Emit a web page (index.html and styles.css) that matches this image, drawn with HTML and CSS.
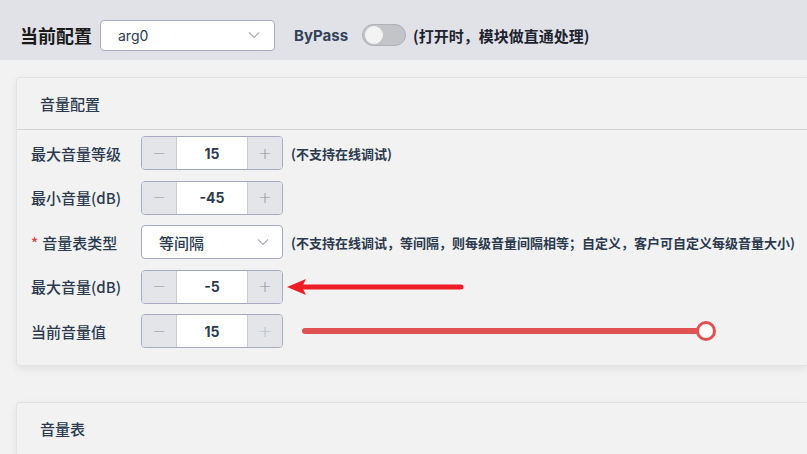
FILE: index.html
```html
<!DOCTYPE html>
<html lang="zh">
<head>
<meta charset="utf-8">
<link rel="stylesheet" href="styles.css">
</head>
<body>
<div class="topbar">
  <span class="title">当前配置</span>
  <div class="select top-select">
    <span class="select-value">arg0</span>
    <svg class="chev" width="12" height="8" viewBox="0 0 12 8"><path d="M1 1.5 L6 6.5 L11 1.5" fill="none" stroke="#a9acb8" stroke-width="1.2"/></svg>
  </div>
  <span class="bypass">ByPass</span>
  <span class="toggle"><span class="knob"></span></span>
  <span class="note-top">(打开时，模块做直通处理)</span>
</div>

<main class="content">
  <section class="card">
    <div class="card-header">音量配置</div>
    <div class="card-body">
      <div class="row">
        <label class="label">最大音量等级</label>
        <div class="num">
          <span class="btn">−</span><span class="val">15</span><span class="btn">+</span>
        </div>
        <span class="hint">(不支持在线调试)</span>
      </div>
      <div class="row">
        <label class="label">最小音量(dB)</label>
        <div class="num">
          <span class="btn">−</span><span class="val">-45</span><span class="btn">+</span>
        </div>
      </div>
      <div class="row">
        <label class="label"><span class="req">*</span>音量表类型</label>
        <div class="select row-select">
          <span class="select-value">等间隔</span>
          <svg class="chev" width="12" height="8" viewBox="0 0 12 8"><path d="M1 1.5 L6 6.5 L11 1.5" fill="none" stroke="#a9acb8" stroke-width="1.2"/></svg>
        </div>
        <span class="hint">(不支持在线调试，等间隔，则每级音量间隔相等；自定义，客户可自定义每级音量大小)</span>
      </div>
      <div class="row arrow-row">
        <label class="label">最大音量(dB)</label>
        <div class="num">
          <span class="btn">−</span><span class="val">-5</span><span class="btn">+</span>
        </div>
        <svg class="arrow" width="180" height="20" viewBox="0 0 180 20">
          <line x1="14" y1="10" x2="174" y2="10" stroke="#ee1c24" stroke-width="5" stroke-linecap="round"/>
          <polygon points="0,10 19,2 15,10 19,18" fill="#ee1c24"/>
        </svg>
      </div>
      <div class="row">
        <label class="label">当前音量值</label>
        <div class="num">
          <span class="btn">−</span><span class="val">15</span><span class="btn disabled">+</span>
        </div>
        <div class="slider">
          <span class="track"></span>
          <span class="thumb"></span>
        </div>
      </div>
    </div>
  </section>

  <section class="card card2">
    <div class="card-header">音量表</div>
  </section>
</main>
</body>
</html>
```

FILE: styles.css
```css
* { box-sizing: border-box; }
html, body { margin: 0; padding: 0; }
body {
  background: #f2f2f2;
  font-family: "Inter", "Noto Sans CJK SC", sans-serif;
  color: #2c3a4f;
  width: 807px;
  height: 454px;
  overflow: hidden;
}
.topbar {
  height: 60px;
  background: #e1e2e7;
  display: flex;
  align-items: center;
  padding: 10px 0 0 20px;
}
.title {
  font-family: "Noto Sans CJK SC", sans-serif;
  font-size: 18px;
  font-weight: 700;
  color: #1a1a1a;
  margin-right: 8px;
}
.select {
  display: flex;
  align-items: center;
  justify-content: space-between;
  background: #fff;
  border: 1px solid #a5aac0;
  border-radius: 4px;
  flex-shrink: 0;
}
.top-select {
  width: 175px;
  height: 31px;
  padding: 0 14px 0 17px;
}
.select-value {
  font-size: 14px;
  color: #2c3a4f;
}
.top-select .select-value { font-family: "Inter", sans-serif; font-size: 14px; }
.bypass {
  margin-left: 19px;
  font-size: 15px;
  font-weight: 700;
  color: #33415a;
}
.toggle {
  margin-left: 14px;
  width: 44px;
  height: 22px;
  border-radius: 11px;
  background: #c3c4c8;
  border: 1px solid #b0b1b6;
  display: flex;
  align-items: center;
  padding-left: 2px;
  flex-shrink: 0;
}
.knob {
  width: 18px;
  height: 18px;
  border-radius: 50%;
  background: #f3f3f3;
}
.note-top {
  margin-left: 7px;
  font-family: "Noto Sans CJK SC", sans-serif;
  font-size: 15px;
  font-weight: 700;
  color: #1e2330;
}

.content {
  padding: 17px 0 0 16px;
}
.card {
  background: #f2f2f2;
  border: 1px solid #e3e3e3;
  border-right: none;
  border-radius: 4px 0 0 4px;
  box-shadow: 0 3px 8px rgba(0, 0, 0, 0.07);
}
.card-header {
  height: 52px;
  line-height: 51px;
  padding-left: 23px;
  border-bottom: 1px solid #d6d6d6;
  font-family: "Noto Sans CJK SC", sans-serif;
  font-size: 15px;
  font-weight: 500;
  color: #2c3a4f;
}
.card-body {
  padding: 6px 0 17px 14px;
  display: flex;
  flex-direction: column;
  gap: 10.5px;
}
.row {
  display: flex;
  align-items: center;
  height: 34px;
  position: relative;
}
.label {
  width: 110px;
  flex-shrink: 0;
  font-family: "Noto Sans CJK SC", sans-serif;
  font-size: 15px;
  font-weight: 500;
  color: #2c3a4f;
}
.req {
  color: #e0403a;
  margin-right: 4px;
}
.num {
  display: flex;
  width: 142px;
  height: 34px;
  flex-shrink: 0;
  border: 1px solid #a5aac0;
  border-radius: 4px;
  overflow: hidden;
  background: #fff;
}
.btn {
  width: 35px;
  background: #e4e5e8;
  color: #8b8f99;
  display: flex;
  align-items: center;
  justify-content: center;
  font-family: "DejaVu Sans", sans-serif;
  font-size: 16px;
  font-weight: 300;
}
.btn:first-child { border-right: 1px solid #c9ccd6; }
.btn:last-child { border-left: 1px solid #c9ccd6; }
.btn.disabled { color: #b8bbc4; }
.val {
  flex: 1;
  display: flex;
  align-items: center;
  justify-content: center;
  font-family: "Inter", sans-serif;
  font-size: 14px;
  font-weight: 700;
  color: #2c3a4f;
}
.row-select {
  width: 142px;
  height: 34px;
  padding: 0 13px 0 17px;
}
.row-select .select-value {
  font-family: "Noto Sans CJK SC", sans-serif;
  font-size: 15px;
  font-weight: 500;
}
.hint {
  margin-left: 8px;
  font-family: "Noto Sans CJK SC", sans-serif;
  font-size: 13px;
  font-weight: 700;
  color: #2c3a4f;
  white-space: nowrap;
}
.arrow {
  position: absolute;
  left: 256px;
  top: 7px;
}
.slider {
  margin-left: 19px;
  width: 414px;
  height: 20px;
  display: flex;
  align-items: center;
  flex-shrink: 0;
}
.track {
  flex: 1;
  height: 6px;
  border-radius: 3px;
  background: #e05252;
  margin-right: -4px;
}
.thumb {
  width: 20px;
  height: 20px;
  border-radius: 50%;
  background: #fff;
  border: 3px solid #e05252;
  position: relative;
}
.card2 {
  margin-top: 36px;
}
```
